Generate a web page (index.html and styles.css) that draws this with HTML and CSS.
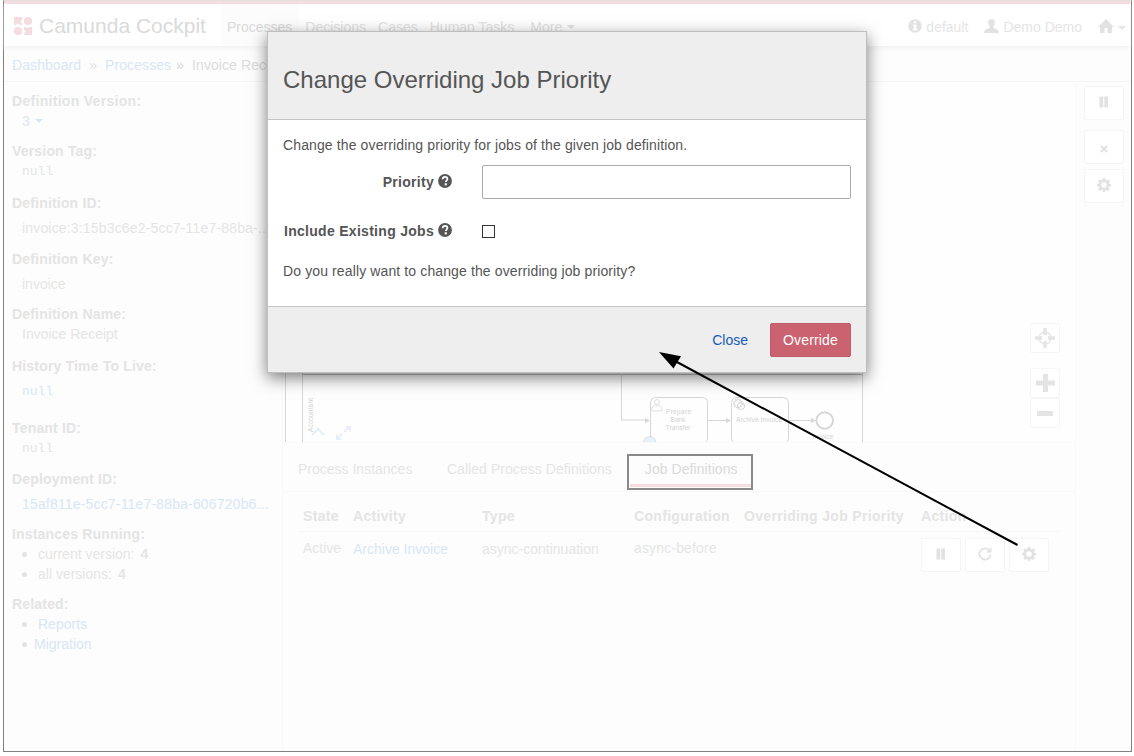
FILE: index.html
```html
<!DOCTYPE html>
<html lang="en">
<head>
<meta charset="utf-8">
<title>Camunda Cockpit</title>
<link rel="stylesheet" href="styles.css">
</head>
<body>
<svg class="defs" width="0" height="0">
  <symbol id="gear" viewBox="0 0 14 14"><path fill-rule="evenodd" d="M5.800 0h2.400l.4 2 1.100.5L11.400 1.300l1.600 1.600-1.100 1.800.4 1.100 1.700.3v2l-1.800.4-.5 1.100 1.100 1.700-1.700 1.700-1.700-1.100-1.100.5-.3 1.700H6l-.4-1.800-1.100-.5-1.700 1.100-1.600-1.600 1.100-1.700-.5-1.100L0 8.100V5.900l1.900-.4.400-1.100-1.100-1.600 1.600-1.600 1.700 1.100L5.500 1.900zM7 4.200a2.800 2.800 0 1 0 0 5.600 2.800 2.800 0 0 0 0-5.600z"/></symbol>
  <symbol id="pause" viewBox="0 0 10 12"><path d="M.5.500h3.700v11H.5zM5.300.5H9v11H5.300z"/></symbol>
  <symbol id="help" viewBox="0 0 14 14"><circle cx="7" cy="7" r="6.900"/><path d="M4.600 5.300C4.700 3.500 5.700 2.800 7.100 2.800c1.400 0 2.300.8 2.300 2.100 0 1.500-1.600 1.700-1.600 3.200" fill="none" stroke="#fff" stroke-width="1.800"/><path d="M6.700 9.200h2.100v2.200H6.700z" fill="#fff"/></symbol>
</svg>
<div class="app">
  <header class="header">
    <div class="brand">
      <svg class="logo" width="20" height="20" viewBox="0 0 20 20"><path d="M1 1h8v3a1.500 1.500 0 1 0 0 3v2H6.500a1.500 1.500 0 0 0-3 0H1zM11 11h2a1.700 1.700 0 0 0 3 0h3v8h-8v-2a1.500 1.500 0 0 0 0-3z"/><circle cx="15" cy="5" r="4.100"/><circle cx="5" cy="15" r="4.100"/></svg>
      <span>Camunda Cockpit</span>
    </div>
    <nav class="nav">
      <a class="current">Processes</a><a>Decisions</a><a>Cases</a><a>Human Tasks</a><a class="more">More <i class="caret"></i></a>
    </nav>
    <div class="account">
      <svg width="14" height="14" viewBox="0 0 14 14"><circle cx="7" cy="7" r="6.800"/><path d="M5.800 2.200h2.600v2H5.800zM5 5.500h3.400v4.300h1v1.600H4.800V9.800h1V7H5z" fill="#fff"/></svg><span class="engine">default</span>
      <svg width="15" height="14" viewBox="0 0 15 14"><path d="M7.500 0c2.300 0 3.600 1.600 3.300 3.900-.2 1.500-.8 2.600-1.500 3.300v1.500c.8.900 4.900 1.600 5.300 3.200l.2 2.100H.2l.2-2.100c.4-1.600 4.500-2.300 5.300-3.200V7.200C5 6.500 4.400 5.400 4.200 3.900 3.900 1.600 5.200 0 7.500 0z"/></svg><span class="user">Demo Demo</span>
      <svg width="16" height="14" viewBox="0 0 16 14"><path d="M8 0l8 8h-2v6H9.500V9h-3v5H2V8H0z"/></svg><i class="caret"></i>
    </div>
  </header>
  <div class="crumbs"><a>Dashboard</a><i>»</i><a>Processes</a><i class="dark">»</i><span>Invoice Receipt</span></div>
  <div class="main">
    <aside class="side">
      <dl>
        <dt class="first">Definition Version:</dt><dd class="link">3 <i class="caret"></i></dd>
        <dt class="g10">Version Tag:</dt><dd class="mono">null</dd>
        <dt class="g12">Definition ID:</dt><dd class="low id">invoice:3:15b3c6e2-5cc7-11e7-88ba-...</dd>
        <dt class="g11">Definition Key:</dt><dd class="low">invoice</dd>
        <dt class="g10">Definition Name:</dt><dd>Invoice Receipt</dd>
        <dt class="g12">History Time To Live:</dt><dd class="low mono link">null</dd>
        <dt class="g17">Tenant ID:</dt><dd class="mono">null</dd>
        <dt class="g11">Deployment ID:</dt><dd class="low id link">15af811e-5cc7-11e7-88ba-606720b6...</dd>
        <dt class="g10">Instances Running:</dt><dd class="item">current version: <b>4</b></dd><dd class="item">all versions: <b>4</b></dd>
        <dt class="g10">Related:</dt><dd class="item link">Reports</dd><dd class="item near link">Migration</dd>
      </dl>
    </aside>
    <section class="center">
      <div class="canvas">
        <svg class="diagram" width="792" height="360" viewBox="283 82 792 360">
          <g fill="none" stroke="#d6d6d6">
            <path d="M285.500 120V442M302.500 120V442M862.500 120V442"/>
            <path d="M303 374.500h559" stroke="#bbb"/>
            <path d="M621.500 374v46H646M708 420.500h20M789 420.500h24"/>
            <rect x="650.500" y="397.500" width="57" height="46" rx="5"/>
            <rect x="731.500" y="397.500" width="57" height="46" rx="5"/>
            <circle cx="824.700" cy="420.500" r="8.300" stroke-width="2"/>
            <circle cx="657" cy="402" r="2.500" stroke-width=".7"/>
            <path d="M652 411v-3q1-2 3-3 2 2 4 0 2 1 3 3v3z" stroke-width=".7"/>
            <circle cx="738" cy="403.500" r="4" stroke-width="2" stroke-dasharray="1.500 .7"/><circle cx="741" cy="406" r="3.500" stroke-width="1.500" stroke-dasharray="1.500 .7"/>
          </g>
          <path d="M645 418l5 2.500-5 2.500zM726 418l5 2.500-5 2.500zM811 418l5 2.500-5 2.500z" fill="#d6d6d6"/>
          <circle cx="649.500" cy="443" r="6.500" fill="#e6f1fa" stroke="#d8e2ea"/>
          <g class="shape-text" text-anchor="middle">
            <text x="678.500" y="414" textLength="25">Prepare</text><text x="678" y="422">Bank</text><text x="678" y="430" textLength="25">Transfer</text>
            <text x="759" y="422" textLength="46">Archive Invoice</text>
            <text x="823" y="439">Invoice</text>
            <text transform="translate(313 415) rotate(-90)" textLength="34">Accountant</text>
          </g>
          <g fill="none" stroke="#e7eef8" stroke-width="2"><path d="M312 435l6-6 6 6M337 439l5-5M344 432l5-5"/></g>
          <path d="M336 434v6h6zM345 426h6v6z" fill="#e7eef8"/>
        </svg>
        <div class="zoom">
          <span class="sq reset"><svg width="20" height="20" viewBox="0 0 20 20"><path d="M8.300 0h3.400v7H8.300zM8.300 13h3.400v7H8.300zM0 8.300h7v3.400H0zM13 8.300h7v3.400h-7z"/><circle cx="10" cy="10" r="6" fill="none" stroke="#e6e6e6" stroke-width="1.500"/></svg></span>
          <span class="sq"><svg width="19" height="18" viewBox="0 0 19 18"><path d="M7 0h5v6.500h7v5h-7V18H7v-6.500H0v-5h7z"/></svg></span>
          <span class="sq"><svg width="16" height="5" viewBox="0 0 16 5"><path d="M0 0h16v5H0z"/></svg></span>
        </div>
      </div>
      <div class="tabs"><a>Process Instances</a><a class="called">Called Process Definitions</a><a class="picked"><span>Job Definitions</span></a></div>
      <div class="table">
        <div class="row head"><span>State</span><span>Activity</span><span>Type</span><span>Configuration</span><span>Overriding Job Priority</span><span>Action</span></div>
        <div class="row data"><span>Active</span><span class="link d1">Archive Invoice</span><span class="d1">async-continuation</span><span class="conf">async-before</span><span></span>
          <div class="actions"><span class="btn"><svg width="10" height="12"><use href="#pause"/></svg></span><span class="btn"><svg width="14" height="14" viewBox="0 0 14 14"><path d="M11 3A5.600 5.600 0 1 0 12.600 7.600" fill="none" stroke="#e2e2e2" stroke-width="1.900"/><path d="M13.500 0v5.500H8z"/></svg></span><span class="btn"><svg width="14" height="14"><use href="#gear"/></svg></span></div>
        </div>
      </div>
    </section>
    <aside class="tools">
      <span class="btn"><svg width="10" height="12"><use href="#pause"/></svg></span>
      <span class="btn second"><svg class="cross" width="8" height="8" viewBox="0 0 8 8"><path d="M1 1l6 6M7 1L1 7" stroke="#e2e2e2" stroke-width="2"/></svg></span>
      <span class="btn third"><svg width="14" height="14"><use href="#gear"/></svg></span>
    </aside>
  </div>
</div>
<div class="modal">
  <div class="modal-head">Change Overriding Job Priority</div>
  <div class="modal-body">
    <p>Change the overriding priority for jobs of the given job definition.</p>
    <div class="field"><label>Priority <svg width="14" height="14"><use href="#help"/></svg></label><input type="text" class="text"></div>
    <div class="field check"><label>Include Existing Jobs <svg width="14" height="14"><use href="#help"/></svg></label><span class="box"></span></div>
    <p class="ask">Do you really want to change the overriding job priority?</p>
  </div>
  <div class="modal-foot"><a>Close</a><button>Override</button></div>
</div>
<svg class="pointer" width="1134" height="756"><path d="M1017.500 545L676 361.500" stroke="#000" stroke-width="2"/><path d="M659 352l22 4.300-7.500 12.200z"/></svg>
</body>
</html>
```
FILE: styles.css
```css
* { box-sizing: border-box; }
body { margin: 0; width: 1134px; height: 756px; overflow: hidden; position: relative; background: #fff; font: 14px/20px "Liberation Sans", Arial, sans-serif; color: #e5e5e5; white-space: nowrap; }
i { font-style: normal; }
svg { display: block; fill: #e2e2e2; flex: none; }
.defs { position: absolute; }
.app { margin-left: 3px; width: 1129px; height: 752px; border: 1px solid #808080; border-top-color: #e0e0e0; background: #fdfdfd; display: flex; flex-direction: column; }
.header { height: 45px; border-top: 3px solid #f5dcdf; background: #fff; display: flex; box-shadow: 0 3px 5px -1px #f0f0f0; position: relative; margin-right: 1px; }
.brand { display: flex; align-items: center; width: 217px; padding: 2px 0 0 9px; font-size: 21px; color: #dadada; gap: 6px; }
.logo { fill: #f5dcdf; }
.nav { display: flex; color: #e2e2e2; }
.nav a { padding: 13px 6px 0; }
.nav .current { background: #fcfcfc; color: #dadada; padding-right: 7px; }
.nav .more { padding-left: 10px; }
.caret { display: inline-block; border: 4px solid transparent; border-top-color: currentColor; border-bottom: 0; vertical-align: 3px; margin-left: 1px; }
.account { margin-left: auto; display: flex; align-items: center; padding: 2px 4px 0 0; }
.account span { padding: 2px 0 0 4px; }
.engine { margin-right: 16px; }
.user { margin-right: 16px; }
.account .caret { margin-left: 4px; margin-top: 4px; }
.crumbs { height: 36px; padding: 9px 8px; border-bottom: 1px solid #f6f6f6; display: flex; color: #dcdcdc; letter-spacing: .08px; }
.crumbs a, .link { color: #d9e6f6; }
.crumbs i { margin: 0 8px; color: #e2e2e2; }
.crumbs .dark { margin: 0 8px 0 5px; color: #d6d6d6; }
.main { flex: 1; display: flex; }
.side { width: 279px; border-right: 1px solid #f9f9f9; padding: 9px 8px; }
dl, dd { margin: 0; }
dt { font-weight: bold; color: #e4e4e4; letter-spacing: .18px; }
.first { letter-spacing: .3px; }
dd { padding-left: 10px; }
.g10 { margin-top: 10px; } .g11 { margin-top: 11px; } .g12 { margin-top: 12px; } .g17 { margin-top: 17px; }
.low { margin-top: 5px; }
.id { letter-spacing: .17px; }
.mono { font-family: "Liberation Mono", monospace; font-size: 13px; line-height: 18px; padding-top: 2px; }
.item { display: flex; gap: 4px; }
.item b { margin-left: 2px; }
.item::before { content: ""; width: 5px; height: 5px; border-radius: 50%; background: #e3e3e3; margin: 8px 7px 0 0; }
.near::before { margin-right: 3px; }
.center { width: 793px; border-right: 1px solid #f9f9f9; }
.canvas { height: 361px; border-bottom: 1px solid #f9f9f9; display: flex; background: #fefefe; }
.shape-text { font-size: 6.5px; fill: #d2d2d2; }
.diagram { margin-right: -45px; }
.zoom { padding-top: 241px; }
.sq { display: flex; align-items: center; justify-content: center; width: 30px; height: 30px; border: 1px solid #f6f6f6; border-radius: 2px; background: #fff; }
.reset { margin-bottom: 15px; }
.sq svg { fill: #e4e4e4; }
.tabs { height: 49px; border-bottom: 1px solid #f9f9f9; padding: 11px 15px; display: flex; align-items: flex-start; }
.tabs a { padding-top: 5px; }
.tabs .called { margin-left: 34.5px; letter-spacing: .06px; }
.tabs .picked { margin-left: 15px; width: 126px; height: 36px; border: 2px solid #8a8a8a; padding: 3px 0 0 1px; color: #dadada; }
.picked span { display: block; height: 28px; padding-left: 15px; border-bottom: 3px solid #f5dcdf; letter-spacing: .06px; }
.table { width: 761px; margin-left: 15px; }
.row { display: grid; grid-template-columns: 50px 129px 152px 110px 177px 1fr; padding-left: 5px; }
.head { font-weight: bold; height: 40px; padding-top: 14px; border-bottom: 1px solid #f6f6f6; color: #e4e4e4; letter-spacing: .32px; }
.data { padding-top: 6px; }
.data .d1 { padding-top: 1px; }
.conf { letter-spacing: .15px; }
.actions { display: flex; gap: 4px; }
.btn { display: flex; align-items: center; justify-content: center; width: 40px; height: 34px; border: 1px solid #f5f5f5; border-radius: 2px; background: #fff; }
.actions .btn svg { margin: -2px 1px 0 0; }
.tools { padding: 4px 0 0 8px; }
.second { margin-top: 10px; } .third { margin-top: 5px; }
.tools .btn svg { margin-top: -2px; }
.tools .btn .cross { margin-top: 4px; }
.modal { position: absolute; left: 267px; top: 31px; width: 600px; height: 342px; border: 1px solid #bebebe; background: #fff; color: #555; box-shadow: 0 5px 15px rgba(0,0,0,.5); }
.modal-head { height: 88px; padding: 33px 15px 0; background: #eee; border-bottom: 1px solid #c4c4c4; font-size: 24px; line-height: 30px; }
.modal-body { height: 186px; padding: 15px; }
p { margin: 0; letter-spacing: .12px; }
.field { display: flex; align-items: center; height: 34px; margin-top: 10px; }
label { width: 169px; display: flex; justify-content: flex-end; align-items: center; gap: 4px; font-weight: bold; margin-right: 30px; letter-spacing: .29px; }
label svg { fill: #555; margin-top: -2px; }
.text { width: 369px; height: 34px; border: 1px solid #aaa; border-radius: 2px; padding: 0; }
.check { margin-top: 15px; }
.box { width: 13px; height: 13px; border: 1px solid #333; margin-top: 1px; }
.ask { margin-top: 13px; }
.modal-foot { height: 66px; background: #eee; border-top: 1px solid #c4c4c4; display: flex; justify-content: flex-end; align-items: center; padding: 0 15px; gap: 22px; }
.modal-foot a { color: #155cb5; }
button { width: 81px; height: 34px; border: 1px solid #c05a68; border-radius: 2px; background: #cb6270; color: #fff; font: inherit; padding: 0; letter-spacing: .15px; }
.pointer { position: absolute; left: 0; top: 0; fill: #000; pointer-events: none; }
```
